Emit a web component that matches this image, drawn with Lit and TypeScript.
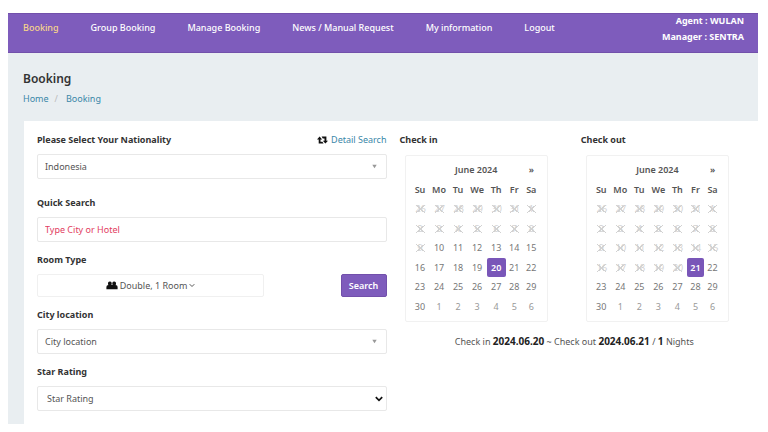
import { LitElement, html, css, svg } from "lit";
import { customElement, property } from "lit/decorators.js";
import { classMap } from "lit/directives/class-map.js";

const DAYS = ["Su", "Mo", "Tu", "We", "Th", "Fr", "Sa"];
const NAV = ["Booking", "Group Booking", "Manage Booking", "News / Manual Request", "My information", "Logout"];

interface Day {
  date: number;
  index: number;
  outside: boolean;
}

/** Six weeks that start on Sunday, 26 May 2024. */
const WEEKS: Day[][] = Array.from({ length: 6 }, (_, w) =>
  Array.from({ length: 7 }, (_, d) => {
    const index = w * 7 + d - 5;
    const date = index < 1 ? index + 31 : index > 30 ? index - 30 : index;
    return { date, index, outside: index < 1 || index > 30 };
  })
);

@customElement("month-calendar")
export class MonthCalendar extends LitElement {
  @property({ type: Number }) selected = 1;
  @property({ type: Number }) first = 1;

  static styles = css`
    :host {
      display: block;
      border: 1px solid #f1f1f1;
      border-radius: 2px;
      padding: 4px 7px 5px 5px;
      color: #777;
    }
    table {
      width: 100%;
      border-collapse: collapse;
      table-layout: fixed;
      font-size: 9px;
      line-height: 12px;
    }
    tr:nth-child(odd) { height: 20px; }
    tr:nth-child(even) { height: 19px; }
    th, td { padding: 0; text-align: center; }
    th { color: #555; font-weight: 600; }
    .late { width: 17px; }
    button {
      display: block;
      width: 100%;
      height: 19px;
      padding: 0;
      border: 0;
      border-radius: 2px;
      background: none;
      color: inherit;
      font: inherit;
    }
    .outside { color: #999; }
    .off { color: #d2d2d2; }
    .off span {
      display: inline-block;
      width: 9px;
      line-height: 8px;
      background:
        linear-gradient(to top right, transparent 45%, #d2d2d2 45% 55%, transparent 55%),
        linear-gradient(to bottom right, transparent 45%, #d2d2d2 45% 55%, transparent 55%);
    }
    .chosen { background: #7956b8; color: #fff; font-weight: 600; }
  `;

  render() {
    return html`
      <table>
        <colgroup>
          <col span="5" />
          <col class="late" />
          <col class="late" />
        </colgroup>
        <thead>
          <tr>
            <th></th>
            <th colspan="5">June 2024</th>
            <th><button type="button" aria-label="Next month">»</button></th>
          </tr>
          <tr>${DAYS.map((d) => html`<th scope="col">${d}</th>`)}</tr>
        </thead>
        <tbody>
          ${WEEKS.map(
            (week) => html`<tr>
              ${week.map((day) => {
                const off = day.index < this.first;
                const classes = {
                  off,
                  outside: day.outside && !off,
                  chosen: day.index === this.selected,
                };
                return html`<td>
                  <button type="button" class=${classMap(classes)} ?disabled=${off}><span>${day.date}</span></button>
                </td>`;
              })}
            </tr>`
          )}
        </tbody>
      </table>
    `;
  }
}

const smallArrow = svg`<svg class="arrow" width="5" height="5" viewBox="0 0 5 5" aria-hidden="true"><path d="M0.3 0.8h4.4L2.5 4.3z" fill="#999"/></svg>`;
const chevron = svg`<svg class="chevron" width="8" height="6" viewBox="0 0 8 6" aria-hidden="true"><path d="M0.8 1.2L4 4.4L7.2 1.2" fill="none" stroke="#111" stroke-width="1.7"/></svg>`;

@customElement("app-root")
export class AppRoot extends LitElement {
  static styles = css`
    :host {
      display: block;
      padding: 13px 10px 8px 8px;
      background: #fff;
      color: #555;
      font-family: "Noto Sans", sans-serif;
      font-size: 9px;
      line-height: 14px;
    }
    * { box-sizing: border-box; }
    a { color: #3a87a8; text-decoration: none; }
    header {
      display: flex;
      justify-content: space-between;
      height: 40px;
      padding: 0 14px 0 15px;
      background: #7e5cbc;
      box-shadow: inset 0 1px #7250ab, inset 0 -1px #7250ab;
      color: #fff;
    }
    nav { display: flex; gap: 32px; padding-top: 8px; font-weight: 500; }
    nav a { color: #fff; }
    nav a.current { color: #f7d58b; }
    .who { text-align: right; font-weight: 700; white-space: nowrap; }
    .who div { line-height: 16px; }
    main { background: #e9eef1; padding: 17px 0 0 15px; }
    h1 { margin: 0; font-size: 12px; line-height: 18px; font-weight: 600; color: #333; }
    .crumbs { display: flex; margin-top: 4px; padding-bottom: 15px; }
    .crumbs span { margin: 0 8px 0 6px; color: #bbb; }
    .card {
      display: grid;
      grid-template-columns: 1fr 1fr;
      gap: 13px;
      padding: 12px 9px 13px 13px;
      margin-left: 1px;
      background: #fff;
    }
    .form { display: flex; flex-direction: column; gap: 11px; }
    .field { display: flex; flex-direction: column; gap: 7px; }
    .field:first-child { margin-bottom: 6px; }
    .top { display: flex; justify-content: space-between; }
    label, .label { font-weight: 700; color: #333; }
    .detail { display: flex; align-items: center; gap: 3px; }
    .box { position: relative; }
    select, input, .room {
      display: block;
      width: 100%;
      height: 25px;
      margin: 0;
      padding: 0 7px;
      border: 1px solid #e8e8e8;
      border-radius: 2px;
      background: #fff;
      color: #555;
      font: inherit;
      appearance: none;
    }
    input::placeholder { color: #e2405f; opacity: 1; }
    .star { padding: 0 9px; }
    .arrow { position: absolute; right: 10px; top: 10px; pointer-events: none; }
    .chevron { position: absolute; right: 4px; top: 10px; pointer-events: none; }
    .row { display: flex; justify-content: space-between; }
    .room {
      display: flex;
      align-items: center;
      justify-content: center;
      gap: 2px;
      width: 65%;
      height: 23px;
      border-color: #f0f0f0;
    }
    .search {
      height: 23px;
      width: 46px;
      padding: 0;
      border: 1px solid #7250ab;
      border-radius: 2px;
      background: #7e5cbc;
      color: #fff;
      font: inherit;
      font-weight: 600;
    }
    .dates { display: grid; grid-template-columns: 1fr 1fr; column-gap: 13px; align-content: start; }
    month-calendar { margin: 8px 20px 0 5px; }
    .summary { grid-column: 1 / -1; margin: 12px 0 0; text-align: center; }
    .summary b { color: #222; font-size: 10px; }
  `;

  render() {
    return html`
      <header>
        <nav>
          ${NAV.map((n, i) => html`<a href="#" class=${classMap({ current: i === 0 })}>${n}</a>`)}
        </nav>
        <div class="who">
          <div>Agent : WULAN</div>
          <div>Manager : SENTRA</div>
        </div>
      </header>
      <main>
        <h1>Booking</h1>
        <div class="crumbs"><a href="#">Home</a><span>/</span><a href="#">Booking</a></div>
        <section class="card">
          <form class="form">
            <div class="field">
              <div class="top">
                <label for="nationality">Please Select Your Nationality</label>
                <a class="detail" href="#">
                  <svg width="11" height="8" viewBox="0 0 11 8" aria-hidden="true">
                    <path d="M2.6 0.6L5.2 3.4H3.5V5.8H5.4L6.6 7.6H1.7V3.4H0z M4.6 0.6H9.4V4.8H11L8.4 7.6L5.8 4.8H7.5V2.4H5.8z" fill="#111" />
                  </svg>
                  Detail Search
                </a>
              </div>
              <div class="box">
                <select id="nationality"><option>Indonesia</option></select>
                ${smallArrow}
              </div>
            </div>
            <div class="field">
              <label for="quick">Quick Search</label>
              <input id="quick" type="text" placeholder="Type City or Hotel" />
            </div>
            <div class="field">
              <span class="label" id="room-label">Room Type</span>
              <div class="row">
                <button type="button" class="room" aria-describedby="room-label">
                  <svg width="12" height="9" viewBox="0 0 12 9" aria-hidden="true">
                    <g fill="#111">
                      <rect x="2" y="0.6" width="3.7" height="4" rx="1.6" />
                      <rect x="6.3" y="0.6" width="3.7" height="4" rx="1.6" />
                      <path d="M0.4 8.2V6Q0.4 4 2.6 4H9.4Q11.6 4 11.6 6V8.2z" />
                    </g>
                  </svg>
                  Double, 1 Room
                  <svg width="6" height="5" viewBox="0 0 6 5" aria-hidden="true">
                    <path d="M0.7 1.2L3 3.5L5.3 1.2" fill="none" stroke="#555" />
                  </svg>
                </button>
                <button type="button" class="search">Search</button>
              </div>
            </div>
            <div class="field">
              <label for="city">City location</label>
              <div class="box">
                <select id="city"><option>City location</option></select>
                ${smallArrow}
              </div>
            </div>
            <div class="field">
              <label for="star">Star Rating</label>
              <div class="box">
                <select id="star" class="star"><option>Star Rating</option></select>
                ${chevron}
              </div>
            </div>
          </form>
          <div class="dates">
            <div>
              <span class="label">Check in</span>
              <month-calendar .selected=${20} .first=${10}></month-calendar>
            </div>
            <div>
              <span class="label">Check out</span>
              <month-calendar .selected=${21} .first=${21}></month-calendar>
            </div>
            <p class="summary">
              Check in <b>2024.06.20</b> ~ Check out <b>2024.06.21</b> / <b>1</b> Nights
            </p>
          </div>
        </section>
      </main>
    `;
  }
}
